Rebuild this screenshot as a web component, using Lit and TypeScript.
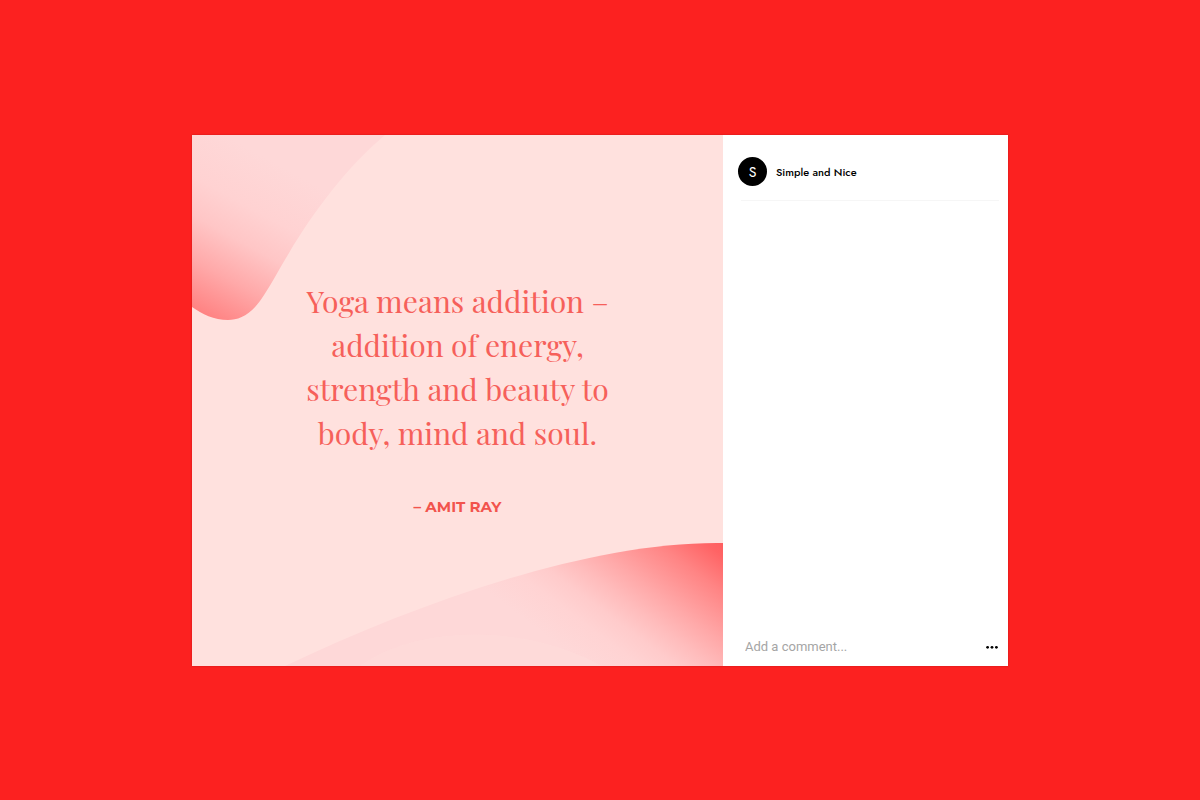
import { LitElement, html, css } from "lit";
import { customElement, property } from "lit/decorators.js";

@customElement("quote-art")
class QuoteArt extends LitElement {
  @property({ type: Array }) lines: string[] = [];
  @property() author = "";

  static styles = css`
    :host {
      display: grid;
      aspect-ratio: 1;
      background: #ffe1de;
      color: #f6605a;
    }
    .waves,
    .quote {
      grid-area: 1 / 1;
    }
    .waves {
      display: block;
      width: 100%;
      height: 100%;
    }
    .quote {
      display: flex;
      flex-direction: column;
      justify-content: center;
      gap: 42px;
      margin: 0;
      padding-bottom: 6px;
      text-align: center;
      z-index: 1;
    }
    .text {
      margin: 0;
      font: 400 30px/44px "Playfair Display", "Liberation Serif", serif;
    }
    .line {
      display: block;
    }
    .author {
      font: 700 15px/20px Montserrat, Inter, sans-serif;
      color: #f2544d;
    }
  `;

  render() {
    return html`
      <svg class="waves" viewBox="0 0 531 531" preserveAspectRatio="none" aria-hidden="true">
        <defs>
          <linearGradient id="top" gradientUnits="userSpaceOnUse" x1="20" y1="188" x2="102" y2="38">
            <stop offset="0" stop-color="#ff7f7f" />
            <stop offset="0.27" stop-color="#ffa9a9" />
            <stop offset="0.5" stop-color="#ffc6c6" />
            <stop offset="0.7" stop-color="#ffd2d2" />
            <stop offset="1" stop-color="#fed8d8" />
          </linearGradient>
          <linearGradient id="bottom" gradientUnits="userSpaceOnUse" x1="531" y1="408" x2="423" y2="552">
            <stop offset="0" stop-color="#ff5e5f" />
            <stop offset="0.06" stop-color="#ff6465" />
            <stop offset="0.22" stop-color="#ff8484" />
            <stop offset="0.45" stop-color="#ffa9a9" />
            <stop offset="0.58" stop-color="#ffbcbc" />
            <stop offset="0.7" stop-color="#ffcbcb" />
            <stop offset="0.82" stop-color="#ffd3d3" />
            <stop offset="1" stop-color="#fed8d8" />
          </linearGradient>
        </defs>
        <path fill="url(#top)" d="M0 0H193C155 32 122 76 97 118C86 136 78 152 68 166C57 181 46 185 36 185C22 185 10 179 0 172Z" />
        <path fill="url(#bottom)" d="M93 531C230 466 400 406 531 408V531Z" />
        <path fill="#ffdedb" fill-opacity="0.4" d="M168 531C220 492 330 486 410 531Z" />
      </svg>
      <figure class="quote">
        <blockquote class="text">
          ${this.lines.map((line) => html`<span class="line">${line}</span>`)}
        </blockquote>
        <figcaption class="author">– ${this.author}</figcaption>
      </figure>
    `;
  }
}

@customElement("post-panel")
class PostPanel extends LitElement {
  @property() name = "";

  static styles = css`
    :host {
      display: flex;
      flex-direction: column;
      background: #fff;
    }
    .header {
      display: flex;
      align-items: center;
      gap: 9px;
      padding: 22px 0 14px 15px;
    }
    .divider {
      width: auto;
      height: 1px;
      margin: 0 9px 0 18px;
      border: 0;
      background: #f6f6f6;
    }
    .avatar {
      display: grid;
      place-items: center;
      width: 29px;
      height: 29px;
      border-radius: 50%;
      background: #000;
      color: #fff;
      font: 400 14px/14px Jost, Lato, sans-serif;
    }
    .name {
      font: 500 11px/16px Jost, Lato, sans-serif;
      color: #000;
    }
    .composer {
      display: flex;
      align-items: center;
      margin-top: auto;
      padding: 0 9px 9px 22px;
    }
    .comment {
      flex: 1;
      min-width: 0;
      padding: 0;
      border: 0;
      outline: 0;
      background: none;
      font: 400 13px/20px Roboto, sans-serif;
      color: #262626;
    }
    .comment::placeholder {
      color: #a5a5a5;
      opacity: 1;
    }
    .more {
      display: block;
      padding: 0;
      border: 0;
      background: none;
      cursor: pointer;
    }
    .dots {
      display: block;
    }
  `;

  render() {
    return html`
      <header class="header">
        <span class="avatar" aria-hidden="true">${this.name.charAt(0)}</span>
        <span class="name">${this.name}</span>
      </header>
      <hr class="divider" />
      <form class="composer" @submit=${(e: Event) => e.preventDefault()}>
        <input class="comment" type="text" aria-label="Add a comment" placeholder="Add a comment..." />
        <button class="more" type="button" aria-label="More options">
          <svg class="dots" width="14" height="18" viewBox="0 0 14 18" aria-hidden="true">
            <circle cx="2.6" cy="9.3" r="1.4" />
            <circle cx="7" cy="9.3" r="1.4" />
            <circle cx="11.4" cy="9.3" r="1.4" />
          </svg>
        </button>
      </form>
    `;
  }
}

@customElement("app-root")
class AppRoot extends LitElement {
  static styles = css`
    :host {
      display: grid;
      place-items: center;
      box-sizing: border-box;
      min-height: 100vh;
      padding-top: 1px;
      background: #fc2120;
    }
    .card {
      display: grid;
      grid-template-columns: 531fr 285fr;
      width: 68%;
      box-shadow: 0 0 2px rgba(90, 0, 0, 0.3);
    }
  `;

  private lines = [
    "Yoga means addition –",
    "addition of energy,",
    "strength and beauty to",
    "body, mind and soul.",
  ];

  render() {
    return html`
      <main class="card">
        <quote-art .lines=${this.lines} author="AMIT RAY"></quote-art>
        <post-panel name="Simple and Nice"></post-panel>
      </main>
    `;
  }
}
